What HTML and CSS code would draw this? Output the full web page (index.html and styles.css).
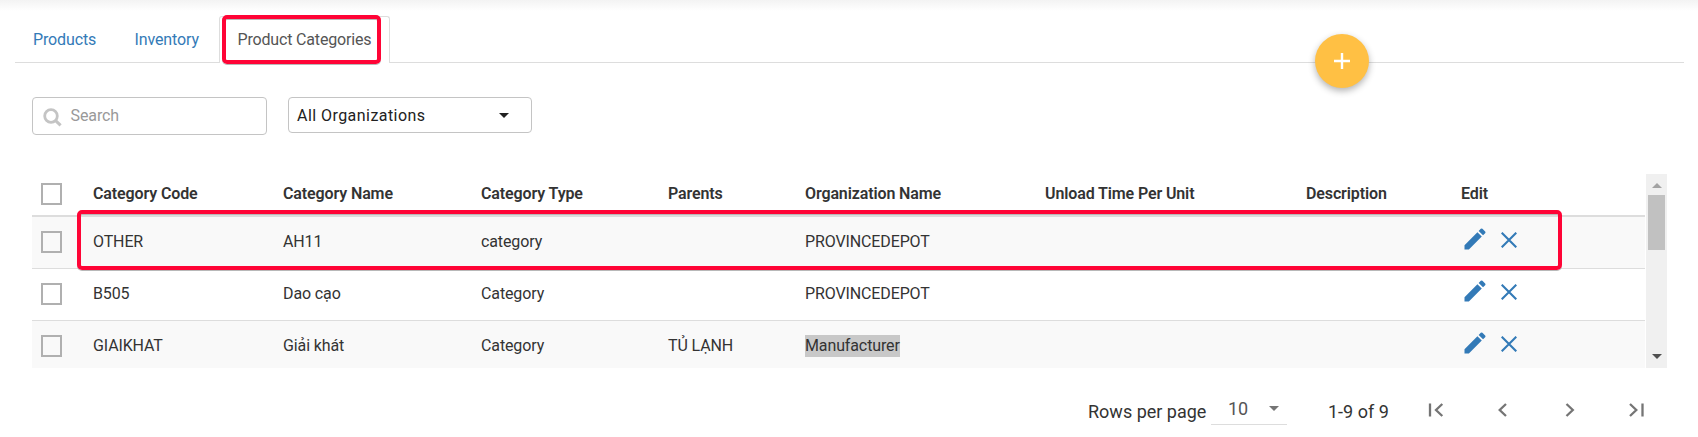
FILE: index.html
```html
<!DOCTYPE html>
<html lang="en">
<head>
<meta charset="utf-8">
<title>Product Categories</title>
<link rel="stylesheet" href="styles.css">
</head>
<body>
<svg class="defs" aria-hidden="true">
  <symbol id="pencil" viewBox="0 0 24 24"><path d="M3 17.25V21h3.75L17.81 9.94l-3.75-3.75L3 17.25zM20.71 7.04a1 1 0 0 0 0-1.41l-2.34-2.34a1 1 0 0 0-1.41 0l-1.83 1.83 3.75 3.75 1.83-1.83z"/></symbol>
  <symbol id="cross" viewBox="0 0 16 16"><path d="M.7.7l14.6 14.6M15.3.7L.7 15.3" fill="none" stroke="currentColor" stroke-width="2.1"/></symbol>
</svg>
<div class="page">
  <nav class="tabs">
    <a class="tab products">Products</a>
    <a class="tab inventory">Inventory</a>
    <a class="tab active">Product Categories<span class="mark tab-mark"></span></a>
    <div class="tabs-rest"><button class="fab" aria-label="Add"><svg viewBox="0 0 16 16"><path d="M8 0v16M0 8h16" stroke="#fff" stroke-width="2.4"/></svg></button></div>
  </nav>
  <div class="filters">
    <div class="search">
      <svg class="lens" viewBox="0 0 19 19"><circle cx="8" cy="8" r="6.3" fill="none" stroke="currentColor" stroke-width="2.8"/><path d="M12.6 12.6l5 4.7" stroke="currentColor" stroke-width="3.1"/></svg>
      <span>Search</span>
    </div>
    <div class="select"><span>All Organizations</span><i class="caret"></i></div>
  </div>
  <div class="table-area">
    <div class="table">
      <div class="row head"><i class="check"></i><span>Category Code</span><span>Category Name</span><span>Category Type</span><span>Parents</span><span>Organization Name</span><span>Unload Time Per Unit</span><span>Description</span><span>Edit</span></div>
      <div class="row odd first"><i class="check"></i><span>OTHER</span><span>AH11</span><span>category</span><span></span><span>PROVINCEDEPOT</span><span></span><span></span><span class="actions"><svg class="pencil"><use href="#pencil"/></svg><svg class="cross"><use href="#cross"/></svg></span><b class="mark row-mark"></b></div>
      <div class="row"><i class="check"></i><span>B505</span><span>Dao cạo</span><span>Category</span><span></span><span>PROVINCEDEPOT</span><span></span><span></span><span class="actions"><svg class="pencil"><use href="#pencil"/></svg><svg class="cross"><use href="#cross"/></svg></span></div>
      <div class="row odd"><i class="check"></i><span>GIAIKHAT</span><span>Giải khát</span><span>Category</span><span>TỦ LẠNH</span><span><span class="selected">Manufacturer</span></span><span></span><span></span><span class="actions"><svg class="pencil"><use href="#pencil"/></svg><svg class="cross"><use href="#cross"/></svg></span></div>
    </div>
    <div class="scrollbar"><i class="arrow up"></i><i class="thumb"></i><i class="arrow down"></i></div>
  </div>
  <div class="pager">
    <span class="label">Rows per page</span>
    <div class="size"><span>10</span><i class="caret"></i></div>
    <span class="range">1-9 of 9</span>
    <div class="nav">
      <svg viewBox="0 0 16 14"><path d="M2 .5v13M14.3 1L8 7l6.300 6"/></svg>
      <svg viewBox="0 0 16 14"><path d="M11 1L4.700 7l6.300 6"/></svg>
      <svg viewBox="0 0 16 14"><path d="M4.500 1l6.300 6-6.300 6"/></svg>
      <svg viewBox="0 0 16 14"><path d="M1 1l6.300 6L1 13M13.500 .5v13"/></svg>
    </div>
  </div>
</div>
</body>
</html>
```
FILE: styles.css
```css
* { box-sizing: border-box; }
body { margin: 0; background: #fff; color: #333; font: 16px/22px Roboto, sans-serif; }
.defs { display: none; }
.page { height: 437px; padding: 16px 14px 0 15px; background: linear-gradient(#f3f3f3, #fff 11px); overflow: hidden; }

.tabs { display: flex; height: 47px; }
.tab { padding: 13px 0 0 18px; border-bottom: 1px solid #ddd; color: #337ab7; white-space: nowrap; letter-spacing: -.12px; }
.products { width: 101px; }
.inventory { width: 103px; padding-left: 18.5px; }
.active { position: relative; width: 171px; padding-top: 12px; border: 1px solid #ddd; border-bottom: 0; border-radius: 3px 3px 0 0; color: #555; }
.tab.active { padding: 12px 0 0 17.5px; letter-spacing: -.17px; }
.mark { position: absolute; border: 4px solid #ff0436; border-radius: 5px; box-shadow: 0 1px 0 #8889, inset 0 1px 0 #8889; pointer-events: none; }
.tab-mark { left: 2px; top: -2px; width: 159px; height: 49px; }
.tabs-rest { flex: 1; border-bottom: 1px solid #ddd; }
.fab { display: flex; align-items: center; justify-content: center; width: 54px; height: 54px; margin: 18px 0 0 925px; padding: 0; border: 0; border-radius: 50%; background: #ffc044; box-shadow: 0 3px 7px rgba(0,0,0,.3); }
.fab svg { width: 16px; height: 16px; }

.filters { display: flex; gap: 21px; align-items: flex-start; padding: 34px 0 0 17px; height: 111px; }
.search { display: flex; align-items: center; width: 235px; height: 38px; padding-left: 10px; border: 1px solid #c4c4c4; border-radius: 4px; color: #999; }
.search span { margin: 0 0 0 8.5px; letter-spacing: -.1px; }
.lens { width: 19px; height: 19px; margin-top: 2px; color: #c4c4c4; }
.select { display: flex; align-items: center; justify-content: space-between; width: 244px; height: 36px; padding: 1px 22px 0 8px; border: 1px solid #c4c4c4; border-radius: 4px; color: #212121; letter-spacing: .45px; }
.caret { border: 5px solid transparent; border-top-color: currentColor; border-bottom: 0; }

.table-area { display: flex; gap: 1px; height: 194px; margin-left: 17px; }
.table { width: 1613px; height: 194px; overflow: hidden; letter-spacing: -.12px; }
.row { position: relative; display: grid; grid-template-columns: 52px 190px 198px 187px 137px 240px 261px 155px 1fr; align-items: start; height: 52px; padding: 14px 0 0 9px; border-bottom: 1px solid #ddd; }
.head { height: 43px; padding-top: 9px; border-bottom-width: 2px; font-weight: 600; }
.odd { background: #f9f9f9; }
.check { width: 21px; height: 22px; border: 2px solid #b0b0b0; }
.row > span { line-height: 22px; }
.selected { display: inline-block; height: 22px; background: #c8c8c8; }
.actions { display: flex; padding-left: 0; color: #337ab7; }
.pencil { width: 28px; height: 28px; margin: -6px 0 0; fill: currentColor; }
.cross { width: 16px; height: 16px; margin: .5px 0 0 12px; }
.row-mark { left: 45px; top: -7px; width: 1485px; height: 60px; z-index: 1; }
.scrollbar { display: flex; flex-direction: column; align-items: center; width: 21px; background: #f0f0f0; }
.arrow { width: 0; height: 0; border: 5px solid transparent; }
.up { margin-top: 9px; border-top: 0; border-bottom-color: #a3a3a3; }
.thumb { width: 17px; height: 55px; margin-top: 7px; background: #c1c1c1; }
.down { margin-top: auto; margin-bottom: 9px; border-bottom: 0; border-top-color: #505050; }

.pager { display: flex; align-items: flex-start; padding: 33px 0 0 1073px; font-size: 18px; line-height: 22px; white-space: nowrap; }
.label { width: 123px; }
.size { display: flex; justify-content: space-between; align-items: center; width: 76px; height: 24px; padding: 0 8px 8px 17px; border-bottom: 1px solid #ddd; color: #555; }
.size .caret { color: #757575; }
.range { width: 99px; padding: 0 0 0 41px; }
.nav { display: flex; gap: 51px; margin: 2px 0 0 42px; }
.nav svg { width: 16px; height: 14px; fill: none; stroke: #757575; stroke-width: 2.300; }
```
